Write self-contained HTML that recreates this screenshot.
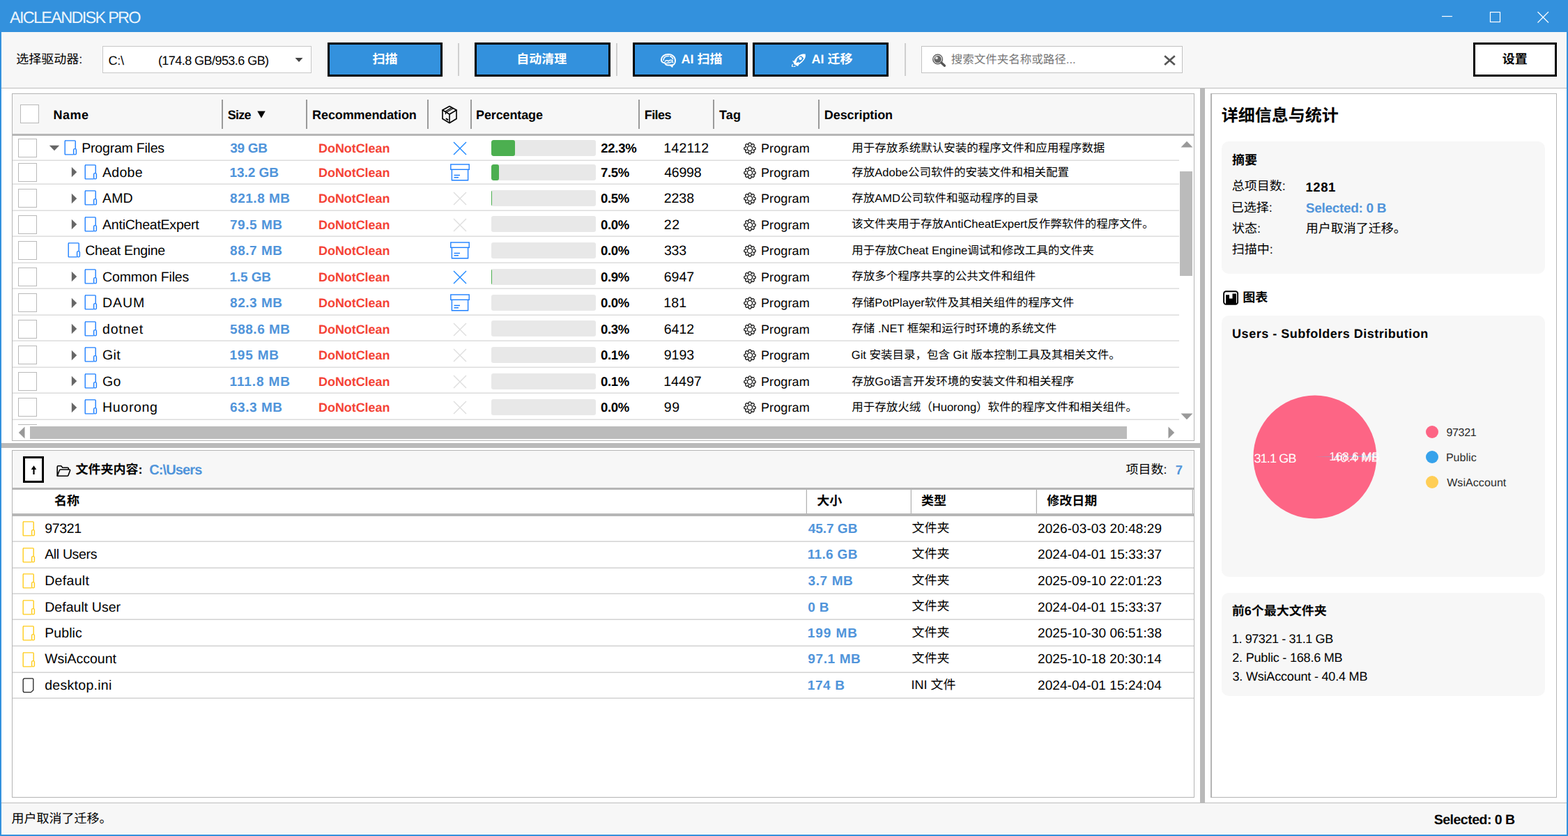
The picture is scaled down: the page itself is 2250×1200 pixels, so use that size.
<!DOCTYPE html>
<html lang="zh"><head><meta charset="utf-8"><title>AICLEANDISK PRO</title>
<style>
html,body{margin:0;padding:0;background:#fff;}
body{width:2250px;height:1200px;position:relative;overflow:hidden;font-family:"Liberation Sans",sans-serif;text-rendering:geometricPrecision;}
div,svg,.t{position:absolute;}
.t{white-space:pre;}
.h{font-family:"Liberation Sans","Noto Sans CJK SC",sans-serif;color:#000;}
</style></head><body>
<div style="left:0px;top:0px;width:2250px;height:1200px;background:#3391dd"></div>
<div style="left:2px;top:46px;width:2246px;height:1152px;background:#fff"></div>
<span class="t" style="left:13.95px;top:9px;font-size:23.5px;line-height:33px;color:rgba(255,255,255,.93);letter-spacing:-1.729px;">AICLEANDISK PRO</span>
<svg style="left:2060px;top:10px;" width="170" height="30" viewBox="0 0 170 30"><g stroke="#fff" stroke-width="1.2" fill="none"><path d="M9 13.5H24"/><rect x="78.5" y="7.5" width="14" height="14"/><path d="M146.5 7L162 22.5M162 7L146.5 22.5"/></g></svg>
<div style="left:2px;top:46px;width:2246px;height:80px;background:#f7f7f7"></div>
<div style="left:2px;top:126px;width:2246px;height:1px;background:#bdbdbd"></div>
<span class="t h" style="left:23.2px;top:73.4px;font-size:18px;line-height:25.2px;">选择驱动器:</span>
<div style="left:147px;top:66px;width:300px;height:39px;background:#fff;border:1px solid #c8c8c8;box-sizing:border-box"></div>
<span class="t" style="left:155.49px;top:75px;font-size:18px;line-height:25px;letter-spacing:-0.251px;">C:\</span>
<span class="t" style="left:226.88px;top:75px;font-size:18px;line-height:25px;letter-spacing:-0.548px;">(174.8 GB/953.6 GB)</span>
<svg style="left:423px;top:82px;" width="12" height="8" viewBox="0 0 12 8"><path d="M0.5 1H11.5L6 7Z" fill="#444"/></svg>
<div style="left:470px;top:61px;width:165px;height:49px;background:#3391dd;border:3px solid #000;box-sizing:border-box"></div>
<span class="t h" style="left:534.5px;top:73.4px;font-size:18px;line-height:25.2px;font-weight:700;color:#fff;">扫描</span>
<div style="left:657px;top:62px;width:2px;height:47px;background:#cfcfcf"></div>
<div style="left:681px;top:61px;width:195px;height:49px;background:#3391dd;border:3px solid #000;box-sizing:border-box"></div>
<span class="t h" style="left:741.3px;top:73.4px;font-size:18px;line-height:25.2px;font-weight:700;color:#fff;">自动清理</span>
<div style="left:884px;top:62px;width:2px;height:47px;background:#cfcfcf"></div>
<div style="left:908px;top:61px;width:165px;height:49px;background:#3391dd;border:3px solid #000;box-sizing:border-box"></div>
<span class="t h" style="left:977.6px;top:73.4px;font-size:18px;line-height:25.2px;font-weight:700;color:#fff;">AI 扫描</span>
<div style="left:1080px;top:61px;width:195px;height:49px;background:#3391dd;border:3px solid #000;box-sizing:border-box"></div>
<span class="t h" style="left:1164.6px;top:73.4px;font-size:18px;line-height:25.2px;font-weight:700;color:#fff;">AI 迁移</span>
<div style="left:1298px;top:62px;width:2px;height:47px;background:#cfcfcf"></div>
<svg style="left:947px;top:76px;" width="24" height="21" viewBox="0 0 24 21"><g fill="none" stroke="#fff" stroke-width="2" stroke-linecap="round" stroke-linejoin="round"><path d="M7 14.3C3.6 14.5 1.8 12 2 9.5C2.3 5 6.5 1.9 12 1.9C18 1.9 22 6 22 11.3C22 15.3 19.5 17.6 16.5 17.6H11.5C8.8 17.6 7.5 16 7 14.3Z"/><path d="M15.3 17.8L17.6 19.9L18 17.4" stroke-width="1.8"/><path d="M5 10.3C5.6 6.6 8.6 4.4 12.4 4.6M14.5 4.8C16.5 5.2 18 6.6 18.6 8.8M7.4 12C9 10.5 11 10.8 12.2 11.9C13.6 10 16.6 9.8 18.2 11.4M9.3 14.6C11 13.6 13 14.8 14.6 13.6C16 12.4 18 13 18.8 13.8" stroke-width="1.5"/></g></svg>
<svg style="left:1136px;top:76.6px;" width="20" height="19.6" viewBox="0 0 20 19.6"><ellipse cx="11.4" cy="8.6" rx="9.4" ry="4.3" transform="rotate(-43 11.4 8.6)" fill="none" stroke="#fff" stroke-width="1.7"/><path d="M19.7 0.5C17 0.3 14.6 1.1 12.9 2.4L17.9 6.9C19.2 5.2 20 3 19.7 0.5Z" fill="#fff"/><circle cx="12.5" cy="7" r="2.15" fill="#fff"/><path d="M0.9 10.2L4.6 10.7L8.3 7.2L6.2 13.4L10.3 11.8L9.8 17.2L7.6 18L6.4 16.2L3.3 13.4Z" fill="#fff"/><path d="M1.6 15.4C0.5 16.6 0.4 18.3 0.6 19C2.2 19.2 4.4 18.8 5.4 17.6" fill="none" stroke="#fff" stroke-width="1.4"/></svg>
<div style="left:1322px;top:66px;width:375px;height:39px;background:#fff;border:1px solid #c2c2c2;box-sizing:border-box"></div>
<svg style="left:1337px;top:77px;" width="21" height="20" viewBox="0 0 21 20"><circle cx="8.6" cy="8" r="6.9" fill="#f4f4f4" stroke="#555" stroke-width="1.3"/><circle cx="8.6" cy="8" r="5.2" fill="#666"/><circle cx="7" cy="6.2" r="1.9" fill="#e4e4e4"/><path d="M13.8 13L18.4 17.3" stroke="#555" stroke-width="3.4" stroke-linecap="round"/></svg>
<span class="t h" style="left:1364.8px;top:75.0px;font-size:16.5px;line-height:23.1px;color:#777;">搜索文件夹名称或路径...</span>
<svg style="left:1668px;top:77px;" width="21" height="19" viewBox="0 0 21 19"><path d="M3.2 3.2L17.8 16M17.8 3.2L3.2 16" stroke="#555" stroke-width="2.6" fill="none"/></svg>
<div style="left:2114px;top:61px;width:120px;height:49px;background:#fff;border:3px solid #000;box-sizing:border-box"></div>
<span class="t h" style="left:2155.8px;top:73.4px;font-size:18px;line-height:25.2px;font-weight:700;">设置</span>
<div style="left:1722px;top:127px;width:7px;height:1026px;background:#b9b9b9"></div>
<div style="left:2px;top:636px;width:1721px;height:7px;background:#b9b9b9"></div>
<div style="left:17px;top:134px;width:1697px;height:499px;background:#fff"></div>
<div style="left:17px;top:134px;width:1697px;height:1px;background:#b4b4b4"></div>
<div style="left:17px;top:631.5px;width:1697px;height:1.5px;background:#b4b4b4"></div>
<div style="left:17px;top:134px;width:1px;height:499px;background:#b4b4b4"></div>
<div style="left:1712.5px;top:134px;width:1.5px;height:499px;background:#b4b4b4"></div>
<div style="left:18px;top:135px;width:1695px;height:57px;background:#f7f7f7"></div>
<div style="left:18px;top:192px;width:1695px;height:3px;background:#b6b6b6"></div>
<div style="left:29px;top:150px;width:27px;height:27px;background:#fff;border:1.5px solid #b9b9b9;box-sizing:border-box"></div>
<div style="left:317.8px;top:143px;width:2px;height:42px;background:#9a9a9a"></div>
<div style="left:439.3px;top:143px;width:2px;height:42px;background:#9a9a9a"></div>
<div style="left:613.3px;top:143px;width:2px;height:42px;background:#9a9a9a"></div>
<div style="left:674.8px;top:143px;width:2px;height:42px;background:#9a9a9a"></div>
<div style="left:916.3px;top:143px;width:2px;height:42px;background:#9a9a9a"></div>
<div style="left:1022.8px;top:143px;width:2px;height:42px;background:#9a9a9a"></div>
<div style="left:1174.4px;top:143px;width:2px;height:42px;background:#9a9a9a"></div>
<span class="t" style="left:76.5px;top:153px;font-size:18px;line-height:25px;font-weight:700;letter-spacing:0.463px;">Name</span>
<span class="t" style="left:326.78px;top:153px;font-size:18px;line-height:25px;font-weight:700;letter-spacing:-0.732px;">Size</span>
<svg style="left:369px;top:159px;" width="12" height="11" viewBox="0 0 12 11"><path d="M0.3 0.5H11.7L6 10.5Z" fill="#000"/></svg>
<span class="t" style="left:448.1px;top:153px;font-size:18px;line-height:25px;font-weight:700;letter-spacing:-0.101px;">Recommendation</span>
<span class="t" style="left:683.1px;top:153px;font-size:18px;line-height:25px;font-weight:700;letter-spacing:-0.138px;">Percentage</span>
<span class="t" style="left:924.8px;top:153px;font-size:18px;line-height:25px;font-weight:700;letter-spacing:-0.597px;">Files</span>
<span class="t" style="left:1032.1px;top:153px;font-size:18px;line-height:25px;font-weight:700;letter-spacing:0.067px;">Tag</span>
<span class="t" style="left:1182.8px;top:153px;font-size:18px;line-height:25px;font-weight:700;letter-spacing:-0.071px;">Description</span>
<svg style="left:633px;top:151px;" width="24" height="27" viewBox="0 0 24 27"><g fill="none" stroke="#000" stroke-width="1.6" stroke-linejoin="round" stroke-linecap="round"><path d="M12 1.5L22 7V19.5L12 25.5L2 19.5V7Z"/><path d="M2 7L12 13L22 7M12 13V25.5"/><path d="M17.5 4.5L7.5 10.2M15.5 3.4L5.5 9.2M6.5 9.8V12.6" stroke-width="1.3"/><path d="M7.5 19.5L9.5 20.8" stroke-width="2"/></g></svg>
<div style="left:18px;top:229px;width:1674px;height:2px;background:linear-gradient(#ececec 50%,#dedede 50%)"></div>
<div style="left:18px;top:263px;width:1674px;height:2px;background:linear-gradient(#ececec 50%,#dedede 50%)"></div>
<div style="left:18px;top:301px;width:1674px;height:2px;background:linear-gradient(#ececec 50%,#dedede 50%)"></div>
<div style="left:18px;top:338px;width:1674px;height:2px;background:linear-gradient(#ececec 50%,#dedede 50%)"></div>
<div style="left:18px;top:376px;width:1674px;height:2px;background:linear-gradient(#ececec 50%,#dedede 50%)"></div>
<div style="left:18px;top:413px;width:1674px;height:2px;background:linear-gradient(#ececec 50%,#dedede 50%)"></div>
<div style="left:18px;top:451px;width:1674px;height:2px;background:linear-gradient(#ececec 50%,#dedede 50%)"></div>
<div style="left:18px;top:488px;width:1674px;height:2px;background:linear-gradient(#ececec 50%,#dedede 50%)"></div>
<div style="left:18px;top:526px;width:1674px;height:2px;background:linear-gradient(#ececec 50%,#dedede 50%)"></div>
<div style="left:18px;top:563px;width:1674px;height:2px;background:linear-gradient(#ececec 50%,#dedede 50%)"></div>
<div style="left:18px;top:601px;width:1674px;height:2px;background:linear-gradient(#ececec 50%,#dedede 50%)"></div>
<div style="left:26px;top:199px;width:27px;height:27px;background:#fff;border:1.5px solid #b9b9b9;box-sizing:border-box"></div>
<svg style="left:70px;top:207.8px;" width="16" height="9" viewBox="0 0 16 9"><path d="M0.8 0.7H15.2L8 8.3Z" fill="#666"/></svg>
<svg style="left:92px;top:200.8px;" width="19" height="22" viewBox="0 0 19 22"><g fill="none" stroke="#1e80ff" stroke-width="1.4" stroke-linejoin="round"><path d="M1.2 0.9H15.3Q16.2 0.9 16.2 1.8V12.5"/><path d="M13.6 20.9H2.1Q1.2 20.9 1.2 20V1.8Q1.2 0.9 2.1 0.9"/><rect x="13.6" y="12.6" width="3.8" height="8.3" rx="1.7"/></g></svg>
<span class="t" style="left:117.3px;top:200px;font-size:19.5px;line-height:27px;letter-spacing:-0.214px;">Program Files</span>
<span class="t" style="left:330.26px;top:200px;font-size:19px;line-height:27px;font-weight:700;color:#5094da;letter-spacing:-0.281px;">39 GB</span>
<span class="t" style="left:457.1px;top:201px;font-size:18px;line-height:25px;font-weight:700;color:#f44336;letter-spacing:-0.076px;">DoNotClean</span>
<svg style="left:650.2px;top:203.0px;" width="20" height="20" viewBox="0 0 20 20"><path d="M1 1L19 19M19 1L1 19" stroke="#1e88ff" stroke-width="1.4" fill="none"/></svg>
<div style="left:705px;top:201px;width:150px;height:23px;background:#e8e8e8;border-radius:3px;overflow:hidden"><div style="left:0;top:0;width:34px;height:23px;background:#4caf50;border-radius:3px;"></div></div>
<span class="t" style="left:862.16px;top:200px;font-size:18.5px;line-height:26px;font-weight:700;letter-spacing:-0.210px;">22.3%</span>
<span class="t" style="left:952.21px;top:200px;font-size:19.5px;line-height:27px;letter-spacing:0.268px;">142112</span>
<svg style="left:1066.05px;top:202.95000000000002px;" width="20" height="20" viewBox="0 0 20 20"><path d="M7.93 5.01L8.00 3.75A2.0 2.0 0 0 1 12.00 3.75L12.07 5.01L13.01 4.17A2.0 2.0 0 0 1 15.83 6.99L14.99 7.93L16.25 8.00A2.0 2.0 0 0 1 16.25 12.00L14.99 12.07L15.83 13.01A2.0 2.0 0 0 1 13.01 15.83L12.07 14.99L12.00 16.25A2.0 2.0 0 0 1 8.00 16.25L7.93 14.99L6.99 15.83A2.0 2.0 0 0 1 4.17 13.01L5.01 12.07L3.75 12.00A2.0 2.0 0 0 1 3.75 8.00L5.01 7.93L4.17 6.99A2.0 2.0 0 0 1 6.99 4.17L7.93 5.01Z" fill="none" stroke="#111" stroke-width="1.25" stroke-linejoin="round"/><circle cx="10" cy="10" r="3.55" fill="none" stroke="#111" stroke-width="1.3"/></svg>
<span class="t" style="left:1091.92px;top:201px;font-size:18px;line-height:25px;letter-spacing:0.122px;">Program</span>
<span class="t h" style="left:1222.3px;top:201.8px;font-size:16.5px;line-height:23.1px;">用于存放系统默认安装的程序文件和应用程序数据</span>
<div style="left:26px;top:234px;width:27px;height:27px;background:#fff;border:1.5px solid #b9b9b9;box-sizing:border-box"></div>
<svg style="left:102px;top:239.2px;" width="9" height="16" viewBox="0 0 9 16"><path d="M0.8 0.7V15.3L8.2 8Z" fill="#666"/></svg>
<svg style="left:120.5px;top:235.7px;" width="19" height="22" viewBox="0 0 19 22"><g fill="none" stroke="#1e80ff" stroke-width="1.4" stroke-linejoin="round"><path d="M1.2 0.9H15.3Q16.2 0.9 16.2 1.8V12.5"/><path d="M13.6 20.9H2.1Q1.2 20.9 1.2 20V1.8Q1.2 0.9 2.1 0.9"/><rect x="13.6" y="12.6" width="3.8" height="8.3" rx="1.7"/></g></svg>
<span class="t" style="left:147.1px;top:235px;font-size:19.5px;line-height:27px;letter-spacing:0.253px;">Adobe</span>
<span class="t" style="left:329.5px;top:235px;font-size:19px;line-height:27px;font-weight:700;color:#5094da;letter-spacing:-0.034px;">13.2 GB</span>
<span class="t" style="left:457.1px;top:236px;font-size:18px;line-height:25px;font-weight:700;color:#f44336;letter-spacing:-0.076px;">DoNotClean</span>
<svg style="left:646.3px;top:235.0px;" width="28" height="25" viewBox="0 0 28 25"><g fill="none" stroke="#1e80ff" stroke-width="1.4"><rect x="0.8" y="1" width="26.4" height="7.3"/><path d="M2.4 8.3V23.8H25.6V8.3"/><path d="M5.5 16.5H14M5.5 19.8H12" stroke-width="1.5"/></g></svg>
<div style="left:705px;top:236px;width:150px;height:23px;background:#e8e8e8;border-radius:3px;overflow:hidden"><div style="left:0;top:0;width:11px;height:23px;background:#4caf50;border-radius:3px;"></div></div>
<span class="t" style="left:862.01px;top:235px;font-size:18.5px;line-height:26px;font-weight:700;letter-spacing:-0.296px;">7.5%</span>
<span class="t" style="left:953.25px;top:235px;font-size:19.5px;line-height:27px;letter-spacing:-0.235px;">46998</span>
<svg style="left:1066.05px;top:237.85px;" width="20" height="20" viewBox="0 0 20 20"><path d="M7.93 5.01L8.00 3.75A2.0 2.0 0 0 1 12.00 3.75L12.07 5.01L13.01 4.17A2.0 2.0 0 0 1 15.83 6.99L14.99 7.93L16.25 8.00A2.0 2.0 0 0 1 16.25 12.00L14.99 12.07L15.83 13.01A2.0 2.0 0 0 1 13.01 15.83L12.07 14.99L12.00 16.25A2.0 2.0 0 0 1 8.00 16.25L7.93 14.99L6.99 15.83A2.0 2.0 0 0 1 4.17 13.01L5.01 12.07L3.75 12.00A2.0 2.0 0 0 1 3.75 8.00L5.01 7.93L4.17 6.99A2.0 2.0 0 0 1 6.99 4.17L7.93 5.01Z" fill="none" stroke="#111" stroke-width="1.25" stroke-linejoin="round"/><circle cx="10" cy="10" r="3.55" fill="none" stroke="#111" stroke-width="1.3"/></svg>
<span class="t" style="left:1091.92px;top:236px;font-size:18px;line-height:25px;letter-spacing:0.122px;">Program</span>
<span class="t h" style="left:1222.3px;top:236.6px;font-size:16.5px;line-height:23.1px;">存放Adobe公司软件的安装文件和相关配置</span>
<div style="left:26px;top:271px;width:27px;height:27px;background:#fff;border:1.5px solid #b9b9b9;box-sizing:border-box"></div>
<svg style="left:102px;top:276.5px;" width="9" height="16" viewBox="0 0 9 16"><path d="M0.8 0.7V15.3L8.2 8Z" fill="#666"/></svg>
<svg style="left:120.5px;top:273.0px;" width="19" height="22" viewBox="0 0 19 22"><g fill="none" stroke="#1e80ff" stroke-width="1.4" stroke-linejoin="round"><path d="M1.2 0.9H15.3Q16.2 0.9 16.2 1.8V12.5"/><path d="M13.6 20.9H2.1Q1.2 20.9 1.2 20V1.8Q1.2 0.9 2.1 0.9"/><rect x="13.6" y="12.6" width="3.8" height="8.3" rx="1.7"/></g></svg>
<span class="t" style="left:147.1px;top:272px;font-size:19.5px;line-height:27px;letter-spacing:0.064px;">AMD</span>
<span class="t" style="left:330.1px;top:272px;font-size:19px;line-height:27px;font-weight:700;color:#5094da;letter-spacing:0.513px;">821.8 MB</span>
<span class="t" style="left:457.1px;top:273px;font-size:18px;line-height:25px;font-weight:700;color:#f44336;letter-spacing:-0.076px;">DoNotClean</span>
<svg style="left:650.2px;top:275.2px;" width="20" height="20" viewBox="0 0 20 20"><path d="M1 1L19 19M19 1L1 19" stroke="#dedede" stroke-width="1.4" fill="none"/></svg>
<div style="left:705px;top:273px;width:150px;height:23px;background:#e8e8e8;border-radius:3px;overflow:hidden"><div style="left:0;top:0;width:1px;height:23px;background:#4caf50;"></div></div>
<span class="t" style="left:862.07px;top:272px;font-size:18.5px;line-height:26px;font-weight:700;letter-spacing:-0.317px;">0.5%</span>
<span class="t" style="left:952.72px;top:272px;font-size:19.5px;line-height:27px;letter-spacing:-0.021px;">2238</span>
<svg style="left:1066.05px;top:275.15px;" width="20" height="20" viewBox="0 0 20 20"><path d="M7.93 5.01L8.00 3.75A2.0 2.0 0 0 1 12.00 3.75L12.07 5.01L13.01 4.17A2.0 2.0 0 0 1 15.83 6.99L14.99 7.93L16.25 8.00A2.0 2.0 0 0 1 16.25 12.00L14.99 12.07L15.83 13.01A2.0 2.0 0 0 1 13.01 15.83L12.07 14.99L12.00 16.25A2.0 2.0 0 0 1 8.00 16.25L7.93 14.99L6.99 15.83A2.0 2.0 0 0 1 4.17 13.01L5.01 12.07L3.75 12.00A2.0 2.0 0 0 1 3.75 8.00L5.01 7.93L4.17 6.99A2.0 2.0 0 0 1 6.99 4.17L7.93 5.01Z" fill="none" stroke="#111" stroke-width="1.25" stroke-linejoin="round"/><circle cx="10" cy="10" r="3.55" fill="none" stroke="#111" stroke-width="1.3"/></svg>
<span class="t" style="left:1091.92px;top:273px;font-size:18px;line-height:25px;letter-spacing:0.122px;">Program</span>
<span class="t h" style="left:1222.3px;top:273.9px;font-size:16.5px;line-height:23.1px;">存放AMD公司软件和驱动程序的目录</span>
<div style="left:26px;top:309px;width:27px;height:27px;background:#fff;border:1.5px solid #b9b9b9;box-sizing:border-box"></div>
<svg style="left:102px;top:314px;" width="9" height="16" viewBox="0 0 9 16"><path d="M0.8 0.7V15.3L8.2 8Z" fill="#666"/></svg>
<svg style="left:120.5px;top:310.5px;" width="19" height="22" viewBox="0 0 19 22"><g fill="none" stroke="#1e80ff" stroke-width="1.4" stroke-linejoin="round"><path d="M1.2 0.9H15.3Q16.2 0.9 16.2 1.8V12.5"/><path d="M13.6 20.9H2.1Q1.2 20.9 1.2 20V1.8Q1.2 0.9 2.1 0.9"/><rect x="13.6" y="12.6" width="3.8" height="8.3" rx="1.7"/></g></svg>
<span class="t" style="left:147.1px;top:310px;font-size:19.5px;line-height:27px;letter-spacing:-0.237px;">AntiCheatExpert</span>
<span class="t" style="left:329.88px;top:310px;font-size:19px;line-height:27px;font-weight:700;color:#5094da;letter-spacing:0.561px;">79.5 MB</span>
<span class="t" style="left:457.1px;top:311px;font-size:18px;line-height:25px;font-weight:700;color:#f44336;letter-spacing:-0.076px;">DoNotClean</span>
<svg style="left:650.2px;top:312.7px;" width="20" height="20" viewBox="0 0 20 20"><path d="M1 1L19 19M19 1L1 19" stroke="#dedede" stroke-width="1.4" fill="none"/></svg>
<div style="left:705px;top:310px;width:150px;height:23px;background:#e8e8e8;border-radius:3px;overflow:hidden"></div>
<span class="t" style="left:862.07px;top:310px;font-size:18.5px;line-height:26px;font-weight:700;letter-spacing:-0.317px;">0.0%</span>
<span class="t" style="left:952.72px;top:310px;font-size:19.5px;line-height:27px;letter-spacing:0.758px;">22</span>
<svg style="left:1066.05px;top:312.65px;" width="20" height="20" viewBox="0 0 20 20"><path d="M7.93 5.01L8.00 3.75A2.0 2.0 0 0 1 12.00 3.75L12.07 5.01L13.01 4.17A2.0 2.0 0 0 1 15.83 6.99L14.99 7.93L16.25 8.00A2.0 2.0 0 0 1 16.25 12.00L14.99 12.07L15.83 13.01A2.0 2.0 0 0 1 13.01 15.83L12.07 14.99L12.00 16.25A2.0 2.0 0 0 1 8.00 16.25L7.93 14.99L6.99 15.83A2.0 2.0 0 0 1 4.17 13.01L5.01 12.07L3.75 12.00A2.0 2.0 0 0 1 3.75 8.00L5.01 7.93L4.17 6.99A2.0 2.0 0 0 1 6.99 4.17L7.93 5.01Z" fill="none" stroke="#111" stroke-width="1.25" stroke-linejoin="round"/><circle cx="10" cy="10" r="3.55" fill="none" stroke="#111" stroke-width="1.3"/></svg>
<span class="t" style="left:1091.92px;top:311px;font-size:18px;line-height:25px;letter-spacing:0.122px;">Program</span>
<span class="t h" style="left:1222.0px;top:311.4px;font-size:16.5px;line-height:23.1px;">该文件夹用于存放AntiCheatExpert反作弊软件的程序文件。</span>
<div style="left:26px;top:346px;width:27px;height:27px;background:#fff;border:1.5px solid #b9b9b9;box-sizing:border-box"></div>
<svg style="left:96.5px;top:348.0px;" width="19" height="22" viewBox="0 0 19 22"><g fill="none" stroke="#1e80ff" stroke-width="1.4" stroke-linejoin="round"><path d="M1.2 0.9H15.3Q16.2 0.9 16.2 1.8V12.5"/><path d="M13.6 20.9H2.1Q1.2 20.9 1.2 20V1.8Q1.2 0.9 2.1 0.9"/><rect x="13.6" y="12.6" width="3.8" height="8.3" rx="1.7"/></g></svg>
<span class="t" style="left:122.3px;top:347px;font-size:19.5px;line-height:27px;letter-spacing:-0.301px;">Cheat Engine</span>
<span class="t" style="left:330.1px;top:347px;font-size:19px;line-height:27px;font-weight:700;color:#5094da;letter-spacing:0.526px;">88.7 MB</span>
<span class="t" style="left:457.1px;top:348px;font-size:18px;line-height:25px;font-weight:700;color:#f44336;letter-spacing:-0.076px;">DoNotClean</span>
<svg style="left:646.3px;top:347.3px;" width="28" height="25" viewBox="0 0 28 25"><g fill="none" stroke="#1e80ff" stroke-width="1.4"><rect x="0.8" y="1" width="26.4" height="7.3"/><path d="M2.4 8.3V23.8H25.6V8.3"/><path d="M5.5 16.5H14M5.5 19.8H12" stroke-width="1.5"/></g></svg>
<div style="left:705px;top:348px;width:150px;height:23px;background:#e8e8e8;border-radius:3px;overflow:hidden"></div>
<span class="t" style="left:862.07px;top:347px;font-size:18.5px;line-height:26px;font-weight:700;letter-spacing:-0.317px;">0.0%</span>
<span class="t" style="left:952.96px;top:347px;font-size:19.5px;line-height:27px;letter-spacing:-0.224px;">333</span>
<svg style="left:1066.05px;top:350.15px;" width="20" height="20" viewBox="0 0 20 20"><path d="M7.93 5.01L8.00 3.75A2.0 2.0 0 0 1 12.00 3.75L12.07 5.01L13.01 4.17A2.0 2.0 0 0 1 15.83 6.99L14.99 7.93L16.25 8.00A2.0 2.0 0 0 1 16.25 12.00L14.99 12.07L15.83 13.01A2.0 2.0 0 0 1 13.01 15.83L12.07 14.99L12.00 16.25A2.0 2.0 0 0 1 8.00 16.25L7.93 14.99L6.99 15.83A2.0 2.0 0 0 1 4.17 13.01L5.01 12.07L3.75 12.00A2.0 2.0 0 0 1 3.75 8.00L5.01 7.93L4.17 6.99A2.0 2.0 0 0 1 6.99 4.17L7.93 5.01Z" fill="none" stroke="#111" stroke-width="1.25" stroke-linejoin="round"/><circle cx="10" cy="10" r="3.55" fill="none" stroke="#111" stroke-width="1.3"/></svg>
<span class="t" style="left:1091.92px;top:348px;font-size:18px;line-height:25px;letter-spacing:0.122px;">Program</span>
<span class="t h" style="left:1222.3px;top:348.9px;font-size:16.5px;line-height:23.1px;">用于存放Cheat Engine调试和修改工具的文件夹</span>
<div style="left:26px;top:384px;width:27px;height:27px;background:#fff;border:1.5px solid #b9b9b9;box-sizing:border-box"></div>
<svg style="left:102px;top:389px;" width="9" height="16" viewBox="0 0 9 16"><path d="M0.8 0.7V15.3L8.2 8Z" fill="#666"/></svg>
<svg style="left:120.5px;top:385.5px;" width="19" height="22" viewBox="0 0 19 22"><g fill="none" stroke="#1e80ff" stroke-width="1.4" stroke-linejoin="round"><path d="M1.2 0.9H15.3Q16.2 0.9 16.2 1.8V12.5"/><path d="M13.6 20.9H2.1Q1.2 20.9 1.2 20V1.8Q1.2 0.9 2.1 0.9"/><rect x="13.6" y="12.6" width="3.8" height="8.3" rx="1.7"/></g></svg>
<span class="t" style="left:147.1px;top:385px;font-size:19.5px;line-height:27px;letter-spacing:-0.137px;">Common Files</span>
<span class="t" style="left:329.5px;top:385px;font-size:19px;line-height:27px;font-weight:700;color:#5094da;letter-spacing:-0.129px;">1.5 GB</span>
<span class="t" style="left:457.1px;top:386px;font-size:18px;line-height:25px;font-weight:700;color:#f44336;letter-spacing:-0.076px;">DoNotClean</span>
<svg style="left:650.2px;top:387.7px;" width="20" height="20" viewBox="0 0 20 20"><path d="M1 1L19 19M19 1L1 19" stroke="#1e88ff" stroke-width="1.4" fill="none"/></svg>
<div style="left:705px;top:386px;width:150px;height:23px;background:#e8e8e8;border-radius:3px;overflow:hidden"><div style="left:0;top:0;width:1px;height:23px;background:#4caf50;"></div></div>
<span class="t" style="left:862.07px;top:385px;font-size:18.5px;line-height:26px;font-weight:700;letter-spacing:-0.317px;">0.9%</span>
<span class="t" style="left:952.71px;top:385px;font-size:19.5px;line-height:27px;letter-spacing:0.027px;">6947</span>
<svg style="left:1066.05px;top:387.65px;" width="20" height="20" viewBox="0 0 20 20"><path d="M7.93 5.01L8.00 3.75A2.0 2.0 0 0 1 12.00 3.75L12.07 5.01L13.01 4.17A2.0 2.0 0 0 1 15.83 6.99L14.99 7.93L16.25 8.00A2.0 2.0 0 0 1 16.25 12.00L14.99 12.07L15.83 13.01A2.0 2.0 0 0 1 13.01 15.83L12.07 14.99L12.00 16.25A2.0 2.0 0 0 1 8.00 16.25L7.93 14.99L6.99 15.83A2.0 2.0 0 0 1 4.17 13.01L5.01 12.07L3.75 12.00A2.0 2.0 0 0 1 3.75 8.00L5.01 7.93L4.17 6.99A2.0 2.0 0 0 1 6.99 4.17L7.93 5.01Z" fill="none" stroke="#111" stroke-width="1.25" stroke-linejoin="round"/><circle cx="10" cy="10" r="3.55" fill="none" stroke="#111" stroke-width="1.3"/></svg>
<span class="t" style="left:1091.92px;top:386px;font-size:18px;line-height:25px;letter-spacing:0.122px;">Program</span>
<span class="t h" style="left:1222.3px;top:386.4px;font-size:16.5px;line-height:23.1px;">存放多个程序共享的公共文件和组件</span>
<div style="left:26px;top:421px;width:27px;height:27px;background:#fff;border:1.5px solid #b9b9b9;box-sizing:border-box"></div>
<svg style="left:102px;top:426.5px;" width="9" height="16" viewBox="0 0 9 16"><path d="M0.8 0.7V15.3L8.2 8Z" fill="#666"/></svg>
<svg style="left:120.5px;top:423.0px;" width="19" height="22" viewBox="0 0 19 22"><g fill="none" stroke="#1e80ff" stroke-width="1.4" stroke-linejoin="round"><path d="M1.2 0.9H15.3Q16.2 0.9 16.2 1.8V12.5"/><path d="M13.6 20.9H2.1Q1.2 20.9 1.2 20V1.8Q1.2 0.9 2.1 0.9"/><rect x="13.6" y="12.6" width="3.8" height="8.3" rx="1.7"/></g></svg>
<span class="t" style="left:147.1px;top:422px;font-size:19.5px;line-height:27px;letter-spacing:0.926px;">DAUM</span>
<span class="t" style="left:330.1px;top:422px;font-size:19px;line-height:27px;font-weight:700;color:#5094da;letter-spacing:0.526px;">82.3 MB</span>
<span class="t" style="left:457.1px;top:423px;font-size:18px;line-height:25px;font-weight:700;color:#f44336;letter-spacing:-0.076px;">DoNotClean</span>
<svg style="left:646.3px;top:422.3px;" width="28" height="25" viewBox="0 0 28 25"><g fill="none" stroke="#1e80ff" stroke-width="1.4"><rect x="0.8" y="1" width="26.4" height="7.3"/><path d="M2.4 8.3V23.8H25.6V8.3"/><path d="M5.5 16.5H14M5.5 19.8H12" stroke-width="1.5"/></g></svg>
<div style="left:705px;top:423px;width:150px;height:23px;background:#e8e8e8;border-radius:3px;overflow:hidden"></div>
<span class="t" style="left:862.07px;top:422px;font-size:18.5px;line-height:26px;font-weight:700;letter-spacing:-0.317px;">0.0%</span>
<span class="t" style="left:952.21px;top:422px;font-size:19.5px;line-height:27px;letter-spacing:0.195px;">181</span>
<svg style="left:1066.05px;top:425.15px;" width="20" height="20" viewBox="0 0 20 20"><path d="M7.93 5.01L8.00 3.75A2.0 2.0 0 0 1 12.00 3.75L12.07 5.01L13.01 4.17A2.0 2.0 0 0 1 15.83 6.99L14.99 7.93L16.25 8.00A2.0 2.0 0 0 1 16.25 12.00L14.99 12.07L15.83 13.01A2.0 2.0 0 0 1 13.01 15.83L12.07 14.99L12.00 16.25A2.0 2.0 0 0 1 8.00 16.25L7.93 14.99L6.99 15.83A2.0 2.0 0 0 1 4.17 13.01L5.01 12.07L3.75 12.00A2.0 2.0 0 0 1 3.75 8.00L5.01 7.93L4.17 6.99A2.0 2.0 0 0 1 6.99 4.17L7.93 5.01Z" fill="none" stroke="#111" stroke-width="1.25" stroke-linejoin="round"/><circle cx="10" cy="10" r="3.55" fill="none" stroke="#111" stroke-width="1.3"/></svg>
<span class="t" style="left:1091.92px;top:423px;font-size:18px;line-height:25px;letter-spacing:0.122px;">Program</span>
<span class="t h" style="left:1222.3px;top:423.9px;font-size:16.5px;line-height:23.1px;">存储PotPlayer软件及其相关组件的程序文件</span>
<div style="left:26px;top:459px;width:27px;height:27px;background:#fff;border:1.5px solid #b9b9b9;box-sizing:border-box"></div>
<svg style="left:102px;top:464px;" width="9" height="16" viewBox="0 0 9 16"><path d="M0.8 0.7V15.3L8.2 8Z" fill="#666"/></svg>
<svg style="left:120.5px;top:460.5px;" width="19" height="22" viewBox="0 0 19 22"><g fill="none" stroke="#1e80ff" stroke-width="1.4" stroke-linejoin="round"><path d="M1.2 0.9H15.3Q16.2 0.9 16.2 1.8V12.5"/><path d="M13.6 20.9H2.1Q1.2 20.9 1.2 20V1.8Q1.2 0.9 2.1 0.9"/><rect x="13.6" y="12.6" width="3.8" height="8.3" rx="1.7"/></g></svg>
<span class="t" style="left:147.1px;top:460px;font-size:19.5px;line-height:27px;letter-spacing:0.749px;">dotnet</span>
<span class="t" style="left:330.12px;top:460px;font-size:19px;line-height:27px;font-weight:700;color:#5094da;letter-spacing:0.510px;">588.6 MB</span>
<span class="t" style="left:457.1px;top:461px;font-size:18px;line-height:25px;font-weight:700;color:#f44336;letter-spacing:-0.076px;">DoNotClean</span>
<svg style="left:650.2px;top:462.7px;" width="20" height="20" viewBox="0 0 20 20"><path d="M1 1L19 19M19 1L1 19" stroke="#dedede" stroke-width="1.4" fill="none"/></svg>
<div style="left:705px;top:460px;width:150px;height:23px;background:#e8e8e8;border-radius:3px;overflow:hidden"></div>
<span class="t" style="left:862.07px;top:460px;font-size:18.5px;line-height:26px;font-weight:700;letter-spacing:-0.317px;">0.3%</span>
<span class="t" style="left:952.71px;top:460px;font-size:19.5px;line-height:27px;letter-spacing:0.027px;">6412</span>
<svg style="left:1066.05px;top:462.65px;" width="20" height="20" viewBox="0 0 20 20"><path d="M7.93 5.01L8.00 3.75A2.0 2.0 0 0 1 12.00 3.75L12.07 5.01L13.01 4.17A2.0 2.0 0 0 1 15.83 6.99L14.99 7.93L16.25 8.00A2.0 2.0 0 0 1 16.25 12.00L14.99 12.07L15.83 13.01A2.0 2.0 0 0 1 13.01 15.83L12.07 14.99L12.00 16.25A2.0 2.0 0 0 1 8.00 16.25L7.93 14.99L6.99 15.83A2.0 2.0 0 0 1 4.17 13.01L5.01 12.07L3.75 12.00A2.0 2.0 0 0 1 3.75 8.00L5.01 7.93L4.17 6.99A2.0 2.0 0 0 1 6.99 4.17L7.93 5.01Z" fill="none" stroke="#111" stroke-width="1.25" stroke-linejoin="round"/><circle cx="10" cy="10" r="3.55" fill="none" stroke="#111" stroke-width="1.3"/></svg>
<span class="t" style="left:1091.92px;top:461px;font-size:18px;line-height:25px;letter-spacing:0.122px;">Program</span>
<span class="t h" style="left:1222.3px;top:461.4px;font-size:16.5px;line-height:23.1px;">存储 .NET 框架和运行时环境的系统文件</span>
<div style="left:26px;top:496px;width:27px;height:27px;background:#fff;border:1.5px solid #b9b9b9;box-sizing:border-box"></div>
<svg style="left:102px;top:501.5px;" width="9" height="16" viewBox="0 0 9 16"><path d="M0.8 0.7V15.3L8.2 8Z" fill="#666"/></svg>
<svg style="left:120.5px;top:498.0px;" width="19" height="22" viewBox="0 0 19 22"><g fill="none" stroke="#1e80ff" stroke-width="1.4" stroke-linejoin="round"><path d="M1.2 0.9H15.3Q16.2 0.9 16.2 1.8V12.5"/><path d="M13.6 20.9H2.1Q1.2 20.9 1.2 20V1.8Q1.2 0.9 2.1 0.9"/><rect x="13.6" y="12.6" width="3.8" height="8.3" rx="1.7"/></g></svg>
<span class="t" style="left:147.1px;top:497px;font-size:19.5px;line-height:27px;letter-spacing:0.351px;">Git</span>
<span class="t" style="left:329.5px;top:497px;font-size:19px;line-height:27px;font-weight:700;color:#5094da;letter-spacing:0.806px;">195 MB</span>
<span class="t" style="left:457.1px;top:498px;font-size:18px;line-height:25px;font-weight:700;color:#f44336;letter-spacing:-0.076px;">DoNotClean</span>
<svg style="left:650.2px;top:500.2px;" width="20" height="20" viewBox="0 0 20 20"><path d="M1 1L19 19M19 1L1 19" stroke="#dedede" stroke-width="1.4" fill="none"/></svg>
<div style="left:705px;top:498px;width:150px;height:23px;background:#e8e8e8;border-radius:3px;overflow:hidden"></div>
<span class="t" style="left:862.07px;top:497px;font-size:18.5px;line-height:26px;font-weight:700;letter-spacing:-0.317px;">0.1%</span>
<span class="t" style="left:952.79px;top:497px;font-size:19.5px;line-height:27px;letter-spacing:-0.040px;">9193</span>
<svg style="left:1066.05px;top:500.15px;" width="20" height="20" viewBox="0 0 20 20"><path d="M7.93 5.01L8.00 3.75A2.0 2.0 0 0 1 12.00 3.75L12.07 5.01L13.01 4.17A2.0 2.0 0 0 1 15.83 6.99L14.99 7.93L16.25 8.00A2.0 2.0 0 0 1 16.25 12.00L14.99 12.07L15.83 13.01A2.0 2.0 0 0 1 13.01 15.83L12.07 14.99L12.00 16.25A2.0 2.0 0 0 1 8.00 16.25L7.93 14.99L6.99 15.83A2.0 2.0 0 0 1 4.17 13.01L5.01 12.07L3.75 12.00A2.0 2.0 0 0 1 3.75 8.00L5.01 7.93L4.17 6.99A2.0 2.0 0 0 1 6.99 4.17L7.93 5.01Z" fill="none" stroke="#111" stroke-width="1.25" stroke-linejoin="round"/><circle cx="10" cy="10" r="3.55" fill="none" stroke="#111" stroke-width="1.3"/></svg>
<span class="t" style="left:1091.92px;top:498px;font-size:18px;line-height:25px;letter-spacing:0.122px;">Program</span>
<span class="t h" style="left:1221.8px;top:498.9px;font-size:16.5px;line-height:23.1px;">Git 安装目录，包含 Git 版本控制工具及其相关文件。</span>
<div style="left:26px;top:534px;width:27px;height:27px;background:#fff;border:1.5px solid #b9b9b9;box-sizing:border-box"></div>
<svg style="left:102px;top:539px;" width="9" height="16" viewBox="0 0 9 16"><path d="M0.8 0.7V15.3L8.2 8Z" fill="#666"/></svg>
<svg style="left:120.5px;top:535.5px;" width="19" height="22" viewBox="0 0 19 22"><g fill="none" stroke="#1e80ff" stroke-width="1.4" stroke-linejoin="round"><path d="M1.2 0.9H15.3Q16.2 0.9 16.2 1.8V12.5"/><path d="M13.6 20.9H2.1Q1.2 20.9 1.2 20V1.8Q1.2 0.9 2.1 0.9"/><rect x="13.6" y="12.6" width="3.8" height="8.3" rx="1.7"/></g></svg>
<span class="t" style="left:147.1px;top:535px;font-size:19.5px;line-height:27px;letter-spacing:0.284px;">Go</span>
<span class="t" style="left:329.5px;top:535px;font-size:19px;line-height:27px;font-weight:700;color:#5094da;letter-spacing:0.897px;">111.8 MB</span>
<span class="t" style="left:457.1px;top:536px;font-size:18px;line-height:25px;font-weight:700;color:#f44336;letter-spacing:-0.076px;">DoNotClean</span>
<svg style="left:650.2px;top:537.7px;" width="20" height="20" viewBox="0 0 20 20"><path d="M1 1L19 19M19 1L1 19" stroke="#dedede" stroke-width="1.4" fill="none"/></svg>
<div style="left:705px;top:536px;width:150px;height:23px;background:#e8e8e8;border-radius:3px;overflow:hidden"></div>
<span class="t" style="left:862.07px;top:535px;font-size:18.5px;line-height:26px;font-weight:700;letter-spacing:-0.317px;">0.1%</span>
<span class="t" style="left:952.21px;top:535px;font-size:19.5px;line-height:27px;letter-spacing:0.058px;">14497</span>
<svg style="left:1066.05px;top:537.65px;" width="20" height="20" viewBox="0 0 20 20"><path d="M7.93 5.01L8.00 3.75A2.0 2.0 0 0 1 12.00 3.75L12.07 5.01L13.01 4.17A2.0 2.0 0 0 1 15.83 6.99L14.99 7.93L16.25 8.00A2.0 2.0 0 0 1 16.25 12.00L14.99 12.07L15.83 13.01A2.0 2.0 0 0 1 13.01 15.83L12.07 14.99L12.00 16.25A2.0 2.0 0 0 1 8.00 16.25L7.93 14.99L6.99 15.83A2.0 2.0 0 0 1 4.17 13.01L5.01 12.07L3.75 12.00A2.0 2.0 0 0 1 3.75 8.00L5.01 7.93L4.17 6.99A2.0 2.0 0 0 1 6.99 4.17L7.93 5.01Z" fill="none" stroke="#111" stroke-width="1.25" stroke-linejoin="round"/><circle cx="10" cy="10" r="3.55" fill="none" stroke="#111" stroke-width="1.3"/></svg>
<span class="t" style="left:1091.92px;top:536px;font-size:18px;line-height:25px;letter-spacing:0.122px;">Program</span>
<span class="t h" style="left:1222.3px;top:536.5px;font-size:16.5px;line-height:23.1px;">存放Go语言开发环境的安装文件和相关程序</span>
<div style="left:26px;top:571px;width:27px;height:27px;background:#fff;border:1.5px solid #b9b9b9;box-sizing:border-box"></div>
<svg style="left:102px;top:576.5px;" width="9" height="16" viewBox="0 0 9 16"><path d="M0.8 0.7V15.3L8.2 8Z" fill="#666"/></svg>
<svg style="left:120.5px;top:573.0px;" width="19" height="22" viewBox="0 0 19 22"><g fill="none" stroke="#1e80ff" stroke-width="1.4" stroke-linejoin="round"><path d="M1.2 0.9H15.3Q16.2 0.9 16.2 1.8V12.5"/><path d="M13.6 20.9H2.1Q1.2 20.9 1.2 20V1.8Q1.2 0.9 2.1 0.9"/><rect x="13.6" y="12.6" width="3.8" height="8.3" rx="1.7"/></g></svg>
<span class="t" style="left:147.1px;top:572px;font-size:19.5px;line-height:27px;letter-spacing:0.674px;">Huorong</span>
<span class="t" style="left:330.0px;top:572px;font-size:19px;line-height:27px;font-weight:700;color:#5094da;letter-spacing:0.541px;">63.3 MB</span>
<span class="t" style="left:457.1px;top:573px;font-size:18px;line-height:25px;font-weight:700;color:#f44336;letter-spacing:-0.076px;">DoNotClean</span>
<svg style="left:650.2px;top:575.2px;" width="20" height="20" viewBox="0 0 20 20"><path d="M1 1L19 19M19 1L1 19" stroke="#dedede" stroke-width="1.4" fill="none"/></svg>
<div style="left:705px;top:573px;width:150px;height:23px;background:#e8e8e8;border-radius:3px;overflow:hidden"></div>
<span class="t" style="left:862.07px;top:572px;font-size:18.5px;line-height:26px;font-weight:700;letter-spacing:-0.317px;">0.0%</span>
<span class="t" style="left:952.79px;top:572px;font-size:19.5px;line-height:27px;letter-spacing:0.635px;">99</span>
<svg style="left:1066.05px;top:575.15px;" width="20" height="20" viewBox="0 0 20 20"><path d="M7.93 5.01L8.00 3.75A2.0 2.0 0 0 1 12.00 3.75L12.07 5.01L13.01 4.17A2.0 2.0 0 0 1 15.83 6.99L14.99 7.93L16.25 8.00A2.0 2.0 0 0 1 16.25 12.00L14.99 12.07L15.83 13.01A2.0 2.0 0 0 1 13.01 15.83L12.07 14.99L12.00 16.25A2.0 2.0 0 0 1 8.00 16.25L7.93 14.99L6.99 15.83A2.0 2.0 0 0 1 4.17 13.01L5.01 12.07L3.75 12.00A2.0 2.0 0 0 1 3.75 8.00L5.01 7.93L4.17 6.99A2.0 2.0 0 0 1 6.99 4.17L7.93 5.01Z" fill="none" stroke="#111" stroke-width="1.25" stroke-linejoin="round"/><circle cx="10" cy="10" r="3.55" fill="none" stroke="#111" stroke-width="1.3"/></svg>
<span class="t" style="left:1091.92px;top:573px;font-size:18px;line-height:25px;letter-spacing:0.122px;">Program</span>
<span class="t h" style="left:1222.3px;top:574.0px;font-size:16.5px;line-height:23.1px;">用于存放火绒（Huorong）软件的程序文件和相关组件。</span>
<svg style="left:1694px;top:202.3px;" width="18" height="10" viewBox="0 0 18 10"><path d="M0.5 9.5H17.5L9 0.8Z" fill="#999"/></svg>
<div style="left:1693px;top:246px;width:18px;height:150px;background:#bbb"></div>
<svg style="left:1694px;top:593px;" width="18" height="10" viewBox="0 0 18 10"><path d="M0.5 0.5H17.5L9 9.2Z" fill="#999"/></svg>
<div style="left:18px;top:610px;width:1695px;height:22px;background:#fff"></div>
<div style="left:26px;top:608.5px;width:27px;height:1.5px;background:#b9b9b9"></div>
<svg style="left:26px;top:612px;" width="10" height="18" viewBox="0 0 10 18"><path d="M9.5 0.5V17.5L0.8 9Z" fill="#999"/></svg>
<div style="left:43px;top:612px;width:1574px;height:18px;background:#bbb"></div>
<svg style="left:1676px;top:612px;" width="10" height="18" viewBox="0 0 10 18"><path d="M0.5 0.5V17.5L9.2 9Z" fill="#999"/></svg>
<div style="left:17px;top:646px;width:1697px;height:499px;background:#fff"></div>
<div style="left:17px;top:646px;width:1697px;height:1.6px;background:#b4b4b4"></div>
<div style="left:17px;top:1143.5px;width:1697px;height:1.5px;background:#b4b4b4"></div>
<div style="left:17px;top:646px;width:1px;height:499px;background:#b4b4b4"></div>
<div style="left:1712.5px;top:646px;width:1.5px;height:499px;background:#b4b4b4"></div>
<div style="left:18px;top:647px;width:1695px;height:53px;background:#f7f7f7"></div>
<div style="left:18px;top:700px;width:1695px;height:3px;background:#b6b6b6"></div>
<div style="left:18px;top:737px;width:1695px;height:3.5px;background:#b6b6b6"></div>
<div style="left:33px;top:655px;width:30px;height:38px;background:#fff;border:3px solid #000;box-sizing:border-box"></div>
<svg style="left:44px;top:668px;" width="9" height="14" viewBox="0 0 9 14"><path d="M4.5 0.3L8.3 6H5.6V13H3.4V6H0.7Z" fill="#000"/></svg>
<svg style="left:79px;top:666px;" width="24" height="20" viewBox="0 0 24 20"><g fill="none" stroke="#000" stroke-width="1.6" stroke-linejoin="round"><path d="M3.2 17.3V4.2Q3.2 2.7 4.7 2.7H8.7L10.8 5.2H18Q19.3 5.2 19.3 6.5V8"/><path d="M3.2 17.3L6.2 9.3Q6.6 8 8 8H20.5Q22 8 21.5 9.4L19 16.2Q18.6 17.3 17.3 17.3Z"/></g></svg>
<span class="t h" style="left:108.5px;top:662.4px;font-size:18px;line-height:25.2px;font-weight:700;">文件夹内容:</span>
<span class="t" style="left:214.18px;top:661px;font-size:20px;line-height:28px;font-weight:700;color:#5094da;letter-spacing:-0.861px;">C:\Users</span>
<span class="t h" style="left:1615.5px;top:661.9px;font-size:18px;line-height:25.2px;">项目数:</span>
<span class="t" style="left:1686.71px;top:662px;font-size:18.5px;line-height:26px;font-weight:700;color:#5094da;">7</span>
<div style="left:1157px;top:703px;width:1px;height:34px;background:#b2b2b2"></div>
<div style="left:1156px;top:703px;width:1px;height:34px;background:#ebebeb"></div>
<div style="left:1307px;top:703px;width:1px;height:34px;background:#b2b2b2"></div>
<div style="left:1306px;top:703px;width:1px;height:34px;background:#ebebeb"></div>
<div style="left:1487px;top:703px;width:1px;height:34px;background:#b2b2b2"></div>
<div style="left:1486px;top:703px;width:1px;height:34px;background:#ebebeb"></div>
<div style="left:1711px;top:703px;width:1px;height:34px;background:#b2b2b2"></div>
<div style="left:1710px;top:703px;width:1px;height:34px;background:#ebebeb"></div>
<span class="t h" style="left:78.0px;top:707.4px;font-size:18px;line-height:25.2px;font-weight:700;">名称</span>
<span class="t h" style="left:1172.3px;top:707.4px;font-size:18px;line-height:25.2px;font-weight:700;">大小</span>
<span class="t h" style="left:1321.9px;top:707.4px;font-size:18px;line-height:25.2px;font-weight:700;">类型</span>
<span class="t h" style="left:1502.2px;top:707.4px;font-size:18px;line-height:25.2px;font-weight:700;">修改日期</span>
<div style="left:18px;top:776px;width:1695px;height:2px;background:linear-gradient(#e6e6e6 50%,#d4d4d4 50%)"></div>
<svg style="left:32px;top:748.0px;" width="19" height="22" viewBox="0 0 19 22"><g fill="none" stroke="#ffcc1a" stroke-width="1.4" stroke-linejoin="round"><path d="M1.2 0.9H15.3Q16.2 0.9 16.2 1.8V12.5"/><path d="M13.6 20.9H2.1Q1.2 20.9 1.2 20V1.8Q1.2 0.9 2.1 0.9"/><rect x="13.6" y="12.6" width="3.8" height="8.3" rx="1.7"/></g></svg>
<span class="t" style="left:64.2px;top:746px;font-size:19.5px;line-height:27px;letter-spacing:-0.342px;">97321</span>
<span class="t" style="left:1159.71px;top:746px;font-size:19px;line-height:27px;font-weight:700;color:#5094da;letter-spacing:-0.019px;">45.7 GB</span>
<span class="t h" style="left:1308.6px;top:745.7px;font-size:18px;line-height:25.2px;">文件夹</span>
<span class="t" style="left:1489.04px;top:746px;font-size:19px;line-height:27px;letter-spacing:0.090px;">2026-03-03 20:48:29</span>
<div style="left:18px;top:814px;width:1695px;height:2px;background:linear-gradient(#e6e6e6 50%,#d4d4d4 50%)"></div>
<svg style="left:32px;top:785.5px;" width="19" height="22" viewBox="0 0 19 22"><g fill="none" stroke="#ffcc1a" stroke-width="1.4" stroke-linejoin="round"><path d="M1.2 0.9H15.3Q16.2 0.9 16.2 1.8V12.5"/><path d="M13.6 20.9H2.1Q1.2 20.9 1.2 20V1.8Q1.2 0.9 2.1 0.9"/><rect x="13.6" y="12.6" width="3.8" height="8.3" rx="1.7"/></g></svg>
<span class="t" style="left:64.2px;top:783px;font-size:19.5px;line-height:27px;letter-spacing:-0.347px;">All Users</span>
<span class="t" style="left:1158.8px;top:783px;font-size:19px;line-height:27px;font-weight:700;color:#5094da;letter-spacing:0.307px;">11.6 GB</span>
<span class="t h" style="left:1308.6px;top:783.2px;font-size:18px;line-height:25.2px;">文件夹</span>
<span class="t" style="left:1489.04px;top:783px;font-size:19px;line-height:27px;letter-spacing:0.093px;">2024-04-01 15:33:37</span>
<div style="left:18px;top:851px;width:1695px;height:2px;background:linear-gradient(#e6e6e6 50%,#d4d4d4 50%)"></div>
<svg style="left:32px;top:823.0px;" width="19" height="22" viewBox="0 0 19 22"><g fill="none" stroke="#ffcc1a" stroke-width="1.4" stroke-linejoin="round"><path d="M1.2 0.9H15.3Q16.2 0.9 16.2 1.8V12.5"/><path d="M13.6 20.9H2.1Q1.2 20.9 1.2 20V1.8Q1.2 0.9 2.1 0.9"/><rect x="13.6" y="12.6" width="3.8" height="8.3" rx="1.7"/></g></svg>
<span class="t" style="left:64.2px;top:821px;font-size:19.5px;line-height:27px;letter-spacing:0.324px;">Default</span>
<span class="t" style="left:1159.56px;top:821px;font-size:19px;line-height:27px;font-weight:700;color:#5094da;letter-spacing:0.610px;">3.7 MB</span>
<span class="t h" style="left:1308.6px;top:820.7px;font-size:18px;line-height:25.2px;">文件夹</span>
<span class="t" style="left:1489.04px;top:821px;font-size:19px;line-height:27px;letter-spacing:0.086px;">2025-09-10 22:01:23</span>
<div style="left:18px;top:888px;width:1695px;height:2px;background:linear-gradient(#e6e6e6 50%,#d4d4d4 50%)"></div>
<svg style="left:32px;top:860.5px;" width="19" height="22" viewBox="0 0 19 22"><g fill="none" stroke="#ffcc1a" stroke-width="1.4" stroke-linejoin="round"><path d="M1.2 0.9H15.3Q16.2 0.9 16.2 1.8V12.5"/><path d="M13.6 20.9H2.1Q1.2 20.9 1.2 20V1.8Q1.2 0.9 2.1 0.9"/><rect x="13.6" y="12.6" width="3.8" height="8.3" rx="1.7"/></g></svg>
<span class="t" style="left:64.2px;top:859px;font-size:19.5px;line-height:27px;letter-spacing:0.050px;">Default User</span>
<span class="t" style="left:1159.25px;top:859px;font-size:19px;line-height:27px;font-weight:700;color:#5094da;letter-spacing:0.268px;">0 B</span>
<span class="t h" style="left:1308.6px;top:858.2px;font-size:18px;line-height:25.2px;">文件夹</span>
<span class="t" style="left:1489.04px;top:859px;font-size:19px;line-height:27px;letter-spacing:0.093px;">2024-04-01 15:33:37</span>
<div style="left:18px;top:926px;width:1695px;height:2px;background:linear-gradient(#e6e6e6 50%,#d4d4d4 50%)"></div>
<svg style="left:32px;top:898.0px;" width="19" height="22" viewBox="0 0 19 22"><g fill="none" stroke="#ffcc1a" stroke-width="1.4" stroke-linejoin="round"><path d="M1.2 0.9H15.3Q16.2 0.9 16.2 1.8V12.5"/><path d="M13.6 20.9H2.1Q1.2 20.9 1.2 20V1.8Q1.2 0.9 2.1 0.9"/><rect x="13.6" y="12.6" width="3.8" height="8.3" rx="1.7"/></g></svg>
<span class="t" style="left:64.2px;top:896px;font-size:19.5px;line-height:27px;letter-spacing:0.098px;">Public</span>
<span class="t" style="left:1158.8px;top:896px;font-size:19px;line-height:27px;font-weight:700;color:#5094da;letter-spacing:0.906px;">199 MB</span>
<span class="t h" style="left:1308.6px;top:895.7px;font-size:18px;line-height:25.2px;">文件夹</span>
<span class="t" style="left:1489.04px;top:896px;font-size:19px;line-height:27px;letter-spacing:0.086px;">2025-10-30 06:51:38</span>
<div style="left:18px;top:964px;width:1695px;height:2px;background:linear-gradient(#e6e6e6 50%,#d4d4d4 50%)"></div>
<svg style="left:32px;top:935.5px;" width="19" height="22" viewBox="0 0 19 22"><g fill="none" stroke="#ffcc1a" stroke-width="1.4" stroke-linejoin="round"><path d="M1.2 0.9H15.3Q16.2 0.9 16.2 1.8V12.5"/><path d="M13.6 20.9H2.1Q1.2 20.9 1.2 20V1.8Q1.2 0.9 2.1 0.9"/><rect x="13.6" y="12.6" width="3.8" height="8.3" rx="1.7"/></g></svg>
<span class="t" style="left:64.2px;top:933px;font-size:19.5px;line-height:27px;letter-spacing:-0.025px;">WsiAccount</span>
<span class="t" style="left:1159.34px;top:933px;font-size:19px;line-height:27px;font-weight:700;color:#5094da;letter-spacing:0.618px;">97.1 MB</span>
<span class="t h" style="left:1308.6px;top:933.2px;font-size:18px;line-height:25.2px;">文件夹</span>
<span class="t" style="left:1489.04px;top:933px;font-size:19px;line-height:27px;letter-spacing:0.071px;">2025-10-18 20:30:14</span>
<div style="left:18px;top:1001px;width:1695px;height:2px;background:linear-gradient(#e6e6e6 50%,#d4d4d4 50%)"></div>
<svg style="left:32px;top:972.5px;" width="18" height="22" viewBox="0 0 18 22"><path d="M3.4 0.9H14.6Q15.8 0.9 15.8 2.1V17.5L12.5 20.6H3.4Q1.2 20.6 1.2 18.4V3.1Q1.2 0.9 3.4 0.9Z" fill="none" stroke="#222" stroke-width="1.3" stroke-linejoin="round"/></svg>
<span class="t" style="left:64.2px;top:971px;font-size:19.5px;line-height:27px;letter-spacing:0.290px;">desktop.ini</span>
<span class="t" style="left:1158.8px;top:971px;font-size:19px;line-height:27px;font-weight:700;color:#5094da;letter-spacing:0.589px;">174 B</span>
<span class="t h" style="left:1307.4px;top:970.7px;font-size:18px;line-height:25.2px;">INI 文件</span>
<span class="t" style="left:1489.04px;top:971px;font-size:19px;line-height:27px;letter-spacing:0.071px;">2024-04-01 15:24:04</span>
<div style="left:1737px;top:134px;width:497px;height:1011px;background:#fff"></div>
<div style="left:1737px;top:134px;width:497px;height:1.2px;background:#b4b4b4"></div>
<div style="left:1737px;top:1143.5px;width:497px;height:1.5px;background:#b4b4b4"></div>
<div style="left:1737px;top:134px;width:1.6px;height:1011px;background:#b4b4b4"></div>
<div style="left:2232.5px;top:134px;width:1.5px;height:1011px;background:#b4b4b4"></div>
<span class="t h" style="left:1752.7px;top:149.9px;font-size:24px;line-height:33.6px;font-weight:700;">详细信息与统计</span>
<div style="left:1753px;top:203px;width:464px;height:189.5px;background:#f7f7f7;border-radius:10px"></div>
<span class="t h" style="left:1768.1px;top:218.4px;font-size:18px;line-height:25.2px;font-weight:700;">摘要</span>
<span class="t h" style="left:1767.7px;top:255.4px;font-size:18px;line-height:25.2px;">总项目数:</span>
<span class="t" style="left:1873.43px;top:256px;font-size:18.5px;line-height:26px;font-weight:700;letter-spacing:0.575px;">1281</span>
<span class="t h" style="left:1766.8px;top:285.7px;font-size:18px;line-height:25.2px;">已选择:</span>
<span class="t" style="left:1873.85px;top:286px;font-size:19px;line-height:27px;font-weight:700;color:#5094da;letter-spacing:-0.301px;">Selected: 0 B</span>
<span class="t h" style="left:1767.9px;top:316.1px;font-size:18px;line-height:25.2px;">状态:</span>
<span class="t h" style="left:1873.7px;top:316.1px;font-size:18px;line-height:25.2px;">用户取消了迁移。</span>
<span class="t h" style="left:1767.8px;top:346.4px;font-size:18px;line-height:25.2px;">扫描中:</span>
<svg style="left:1755px;top:417px;" width="22" height="21" viewBox="0 0 22 21"><rect x="1.1" y="1.2" width="20" height="18.6" rx="3.2" fill="none" stroke="#000" stroke-width="1.9"/><path d="M4 19V6.3H9V11.5H13.5V4.5H19V19Z" fill="#000"/></svg>
<span class="t h" style="left:1783.2px;top:415.4px;font-size:18px;line-height:25.2px;font-weight:700;">图表</span>
<div style="left:1753px;top:453px;width:464px;height:375px;background:#f7f7f7;border-radius:10px"></div>
<span class="t" style="left:1768.12px;top:467px;font-size:18px;line-height:25px;font-weight:700;letter-spacing:0.506px;">Users - Subfolders Distribution</span>
<svg style="left:1787px;top:556px;" width="200" height="200" viewBox="0 0 200 200"><circle cx="99.8" cy="100" r="88.4" fill="#fd6585"/><path d="M99.8 100L188.2 97.4L188.2 99.4Z" fill="#55a8ea"/><path d="M99.8 100L188.2 99.4L188.2 100Z" fill="#f7d98a"/></svg>
<span class="t" style="left:1799.41px;top:646px;font-size:18px;line-height:25px;color:#fff;letter-spacing:-0.819px;">31.1 GB</span>
<span class="t" style="left:1907.31px;top:644px;font-size:17px;line-height:24px;color:#fff;letter-spacing:-0.011px;opacity:.95;">168.6 MB</span>
<span class="t" style="left:1913.61px;top:646px;font-size:17px;line-height:24px;color:#fff;letter-spacing:0.329px;opacity:.9;">40.4 MB</span>
<div style="left:2045.8px;top:610.9px;width:18.4px;height:18.4px;background:#fd6585;border-radius:50%"></div>
<span class="t" style="left:2075.45px;top:611px;font-size:16px;line-height:22px;color:#2b2b2b;letter-spacing:-0.317px;">97321</span>
<div style="left:2045.8px;top:646.9px;width:18.4px;height:18.4px;background:#36a2eb;border-radius:50%"></div>
<span class="t" style="left:2074.89px;top:647px;font-size:16px;line-height:22px;color:#2b2b2b;letter-spacing:0.051px;">Public</span>
<div style="left:2045.8px;top:682.9px;width:18.4px;height:18.4px;background:#ffce56;border-radius:50%"></div>
<span class="t" style="left:2076.13px;top:683px;font-size:16px;line-height:22px;color:#2b2b2b;letter-spacing:0.080px;">WsiAccount</span>
<div style="left:1753px;top:851px;width:464px;height:148px;background:#f7f7f7;border-radius:10px"></div>
<span class="t h" style="left:1767.7px;top:865.1px;font-size:18px;line-height:25.2px;font-weight:700;">前6个最大文件夹</span>
<span class="t" style="left:1767.83px;top:905px;font-size:18px;line-height:25px;letter-spacing:-0.399px;">1. 97321 - 31.1 GB</span>
<span class="t" style="left:1768.29px;top:932px;font-size:18px;line-height:25px;letter-spacing:-0.197px;">2. Public - 168.6 MB</span>
<span class="t" style="left:1768.51px;top:959px;font-size:18px;line-height:25px;letter-spacing:-0.188px;">3. WsiAccount - 40.4 MB</span>
<div style="left:2px;top:1152px;width:2246px;height:1px;background:#bdbdbd"></div>
<div style="left:2px;top:1153px;width:2246px;height:45px;background:#f7f7f7"></div>
<span class="t h" style="left:16.4px;top:1163.4px;font-size:18px;line-height:25.2px;">用户取消了迁移。</span>
<span class="t" style="left:2057.74px;top:1164px;font-size:19.5px;line-height:27px;font-weight:700;letter-spacing:-0.502px;">Selected: 0 B</span>
</body></html>
